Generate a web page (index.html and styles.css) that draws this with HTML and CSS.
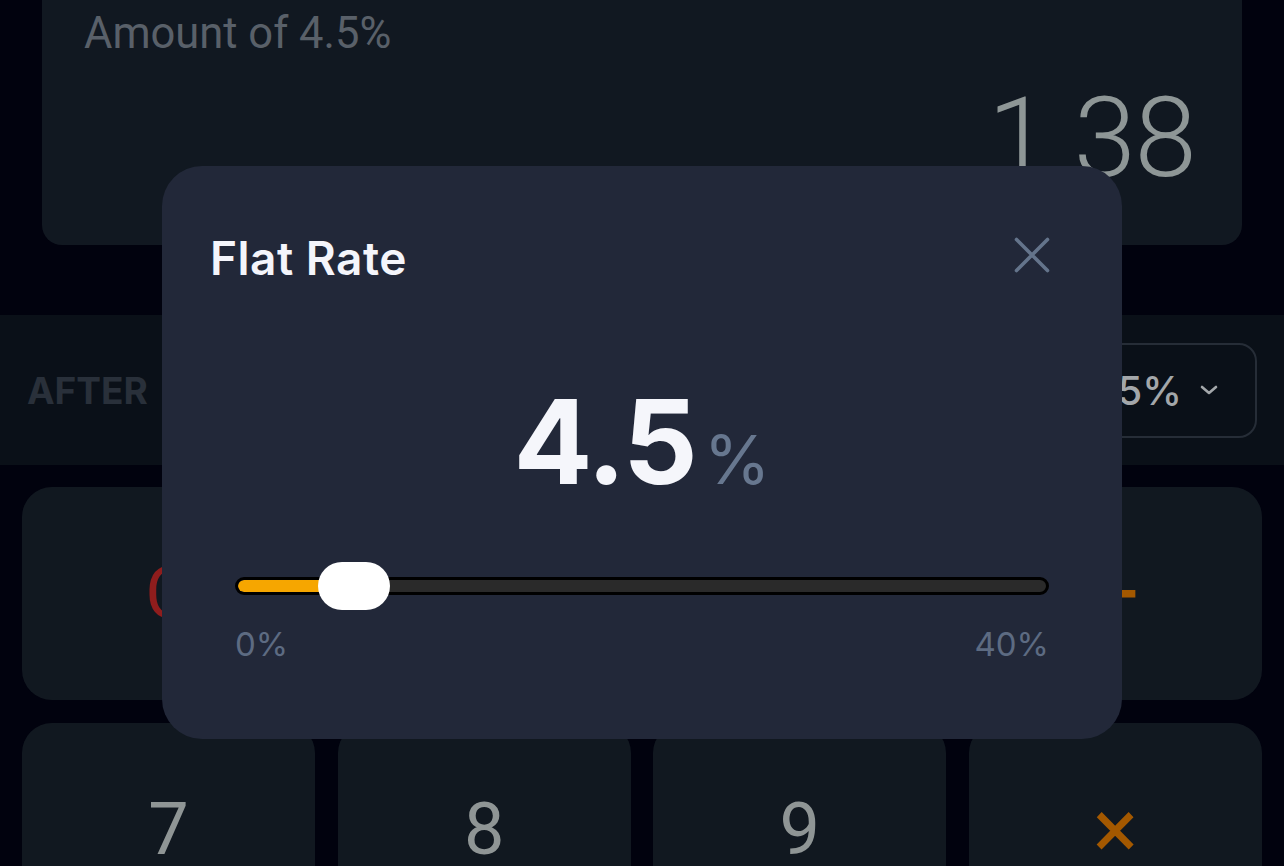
FILE: index.html
```html
<!DOCTYPE html>
<html lang="en">
<head>
    <meta charset="UTF-8">
    <meta name="viewport" content="width=device-width, initial-scale=1.0">
    <title>Tip Calculator - Flat Rate</title>

    <link rel="stylesheet" href="styles.css">
</head>
<body>

    <main class="calc">

        <section class="display">
            <div class="display-label">Amount of 4.5%</div>
            <div class="display-value">1.38</div>
        </section>

        <section class="mode-bar">
            <span class="mode-label">AFTER</span>
            <button class="rate-select" type="button">
                <span>4.5%</span>
                <svg width="18" height="10" viewBox="0 0 18 10"><path d="M2 2 L9 8 L16 2" fill="none" stroke="currentColor" stroke-width="2.6" stroke-linecap="round" stroke-linejoin="round"/></svg>
            </button>
        </section>

        <section class="keypad">
            <button class="key key-clear">C</button>
            <button class="key">±</button>
            <button class="key">%</button>
            <button class="key key-op">÷</button>
            <button class="key">7</button>
            <button class="key">8</button>
            <button class="key">9</button>
            <button class="key key-op">×</button>
        </section>

        <div class="modal" id="rate-modal">
            <div class="modal-header">
                <h2>Flat Rate</h2>
                <button class="modal-close" type="button" onclick="closeModal()">
                    <svg width="36" height="36" viewBox="0 0 36 36"><path d="M2.5 2.5 L33.5 33.5 M33.5 2.5 L2.5 33.5" fill="none" stroke="currentColor" stroke-width="3.6" stroke-linecap="round"/></svg>
                </button>
            </div>

            <div class="rate-value">
                <span class="rate-number">4.5</span><span class="rate-unit">%</span>
            </div>

            <div class="slider">
                <div class="slider-track">
                    <div class="slider-fill" style="width: calc((100% - 66px) * 0.1125 + 33px);"></div>
                </div>
                <div class="slider-thumb" style="left: calc((100% - 72px) * 0.1125);"></div>
            </div>

            <div class="slider-labels">
                <span>0%</span>
                <span>40%</span>
            </div>
        </div>
    </main>

    <script>
        function closeModal() {
            document.getElementById('rate-modal').style.display = 'none';
        }
    </script>
</body>
</html>
```

FILE: styles.css
```css
body {
    margin: 0;
    padding: 0;
    background-color: #01020e;
    font-family: Roboto, "Liberation Sans", sans-serif;
    overflow: hidden;
}

.calc {
    position: relative;
    height: 866px;
    overflow: hidden;
}

/* Result display */
.display {
    margin: 0 42px;
    height: 245px;
    box-sizing: border-box;
    padding: 9px 47px 0 42px;
    background-color: #111821;
    border-radius: 0 0 20px 20px;
}

.display-label {
    font-size: 43.5px;
    line-height: 50px;
    color: #596069;
}

.display-value {
    margin-top: 23px;
    font-size: 112px;
    font-weight: 300;
    line-height: 112px;
    letter-spacing: -1.5px;
    text-align: right;
    color: #8e9696;
}

/* Mode bar */
.mode-bar {
    margin-top: 70px;
    height: 150px;
    box-sizing: border-box;
    padding: 0 27px;
    display: flex;
    align-items: center;
    justify-content: space-between;
    background-color: #0a1018;
}

.mode-label {
    font-family: Inter, "Noto Sans", sans-serif;
    font-size: 37px;
    font-weight: 700;
    color: #29303a;
}

.rate-select {
    height: 95px;
    box-sizing: border-box;
    padding: 0 37px 0 28px;
    display: flex;
    align-items: center;
    gap: 18px;
    background: transparent;
    border: 2px solid #262d37;
    border-radius: 18px;
    font-family: Inter, "Noto Sans", sans-serif;
    font-size: 40px;
    font-weight: 500;
    color: #a3a7aa;
}

/* Keys */
.keypad {
    display: grid;
    grid-template-columns: repeat(4, 1fr);
    gap: 23px 22.5px;
    padding: 22px;
}

.key {
    height: 213px;
    border: none;
    border-radius: 30px;
    background-color: #111820;
    font-family: Roboto, "Liberation Sans", sans-serif;
    font-size: 72px;
    color: #8f9595;
    display: flex;
    align-items: center;
    justify-content: center;
}

.key-clear {
    color: #8f1d1d;
}

.key-op {
    color: #a35800;
    font-size: 84px;
}

/* Flat rate modal */
.modal {
    position: absolute;
    left: 162px;
    top: 166px;
    width: 960px;
    box-sizing: border-box;
    padding: 66px 48px 75px;
    background-color: #222839;
    border-radius: 40px;
    font-family: Inter, "Noto Sans", sans-serif;
}

.modal-header {
    display: flex;
    align-items: center;
    justify-content: space-between;
    padding-right: 24px;
}

.modal-header h2 {
    margin: 0;
    font-size: 46px;
    font-weight: 600;
    line-height: 52px;
    letter-spacing: 0.5px;
    color: #f4f5fb;
}

.modal-close {
    width: 36px;
    height: 36px;
    margin-bottom: 6px;
    padding: 0;
    border: none;
    background: transparent;
    color: #64748b;
    cursor: pointer;
}

.modal-close svg {
    display: block;
}

.rate-value {
    margin-top: 99px;
    display: flex;
    align-items: baseline;
    justify-content: center;
}

.rate-number {
    font-size: 117px;
    font-weight: 700;
    line-height: 117px;
    letter-spacing: -2px;
    color: #f5f6fb;
}

.rate-unit {
    margin-left: 8px;
    font-size: 68px;
    font-weight: 400;
    color: #67778f;
}

/* Slider */
.slider {
    position: relative;
    height: 48px;
    margin: 62px 25px 0;
    display: flex;
    align-items: center;
}

.slider-track {
    width: 100%;
    height: 18px;
    box-sizing: border-box;
    border: 3px solid #000;
    border-radius: 9px;
    background-color: #2a2a2a;
    overflow: hidden;
}

.slider-fill {
    height: 100%;
    border-radius: 6px;
    background-color: #f6a600;
}

.slider-thumb {
    position: absolute;
    top: 0;
    width: 72px;
    height: 48px;
    border-radius: 24px;
    background-color: #fff;
}

.slider-labels {
    margin: 14px 25px 0;
    display: flex;
    justify-content: space-between;
    font-size: 33px;
    line-height: 40px;
    color: #5d6b82;
}
```
